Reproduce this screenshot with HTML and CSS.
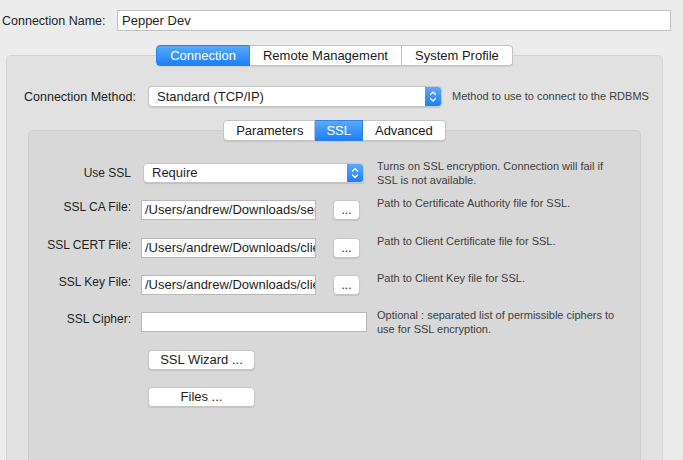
FILE: index.html
```html
<!DOCTYPE html>
<html>
<head>
<meta charset="utf-8">
<link rel="stylesheet" href="styles.css">
</head>
<body>
<div class="name-row">
  <span class="name-label">Connection Name:</span>
  <div class="name-input">Pepper Dev</div>
</div>
<div class="outer">
  <div class="tabs">
    <div class="seg sel">Connection</div>
    <div class="seg">Remote Management</div>
    <div class="seg">System Profile</div>
  </div>
  <div class="panel-outer">
    <div class="method-row">
      <span class="method-label">Connection Method:</span>
      <div class="popup method-popup">
        <span class="popup-text">Standard (TCP/IP)</span>
        <span class="stepper"><svg width="16" height="19" viewBox="0 0 16 19"><path d="M5.5 7.5 L8 5 L10.5 7.5 M5.5 11.5 L8 14 L10.5 11.5" fill="none" stroke="#fff" stroke-width="1.3" stroke-linecap="round" stroke-linejoin="round"/></svg></span>
      </div>
      <span class="help one">Method to use to connect to the RDBMS</span>
    </div>
    <div class="inner-wrap">
      <div class="tabs inner-tabs">
        <div class="seg t-params">Parameters</div>
        <div class="seg sel t-ssl">SSL</div>
        <div class="seg">Advanced</div>
      </div>
      <div class="panel-inner">
        <div class="grid">
          <span class="lbl mid">Use SSL</span>
          <div class="popup ssl-popup">
            <span class="popup-text">Require</span>
            <span class="stepper"><svg width="16" height="18" viewBox="0 0 16 18"><path d="M5.5 7 L8 4.5 L10.5 7 M5.5 11 L8 13.5 L10.5 11" fill="none" stroke="#fff" stroke-width="1.3" stroke-linecap="round" stroke-linejoin="round"/></svg></span>
          </div>
          <span class="help">Turns on SSL encryption. Connection will fail if<br>SSL is not available.</span>

          <span class="lbl">SSL CA File:</span>
          <div class="field">/Users/andrew/Downloads/ser</div>
          <div class="dots">...</div>
          <span class="help">Path to Certificate Authority file for SSL.</span>

          <span class="lbl">SSL CERT File:</span>
          <div class="field">/Users/andrew/Downloads/clie</div>
          <div class="dots">...</div>
          <span class="help">Path to Client Certificate file for SSL.</span>

          <span class="lbl">SSL Key File:</span>
          <div class="field">/Users/andrew/Downloads/clie</div>
          <div class="dots">...</div>
          <span class="help">Path to Client Key file for SSL.</span>

          <span class="lbl">SSL Cipher:</span>
          <div class="field wide"></div>
          <span class="help">Optional : separated list of permissible ciphers to<br>use for SSL encryption.</span>

          <span class="lbl"></span>
          <div class="btn">SSL Wizard ...</div>
          <span></span><span></span>

          <span class="lbl"></span>
          <div class="btn">Files ...</div>
          <span></span><span></span>
        </div>
      </div>
    </div>
  </div>
</div>
</body>
</html>
```

FILE: styles.css
```css
html, body {
  margin: 0;
  padding: 0;
}
body {
  background: #ececec;
  font-family: "Liberation Sans", Arial, sans-serif;
  font-size: 12px;
  color: #1e1e1e;
  height: 460px;
  overflow: hidden;
}
.name-row {
  display: flex;
  align-items: center;
  padding: 10px 0 0 2px;
  height: 21px;
}
.name-label {
  width: 115px;
  flex: none;
  font-size: 12.5px;
}
.name-input {
  flex: none;
  width: 554px;
  height: 21px;
  box-sizing: border-box;
  border: 1px solid #c2c2c2;
  background: #fff;
  padding: 0 0 0 4px;
  font-size: 13px;
  line-height: 19px;
}
.outer {
  margin: 0 20px 0 6px;
}
.tabs {
  display: flex;
  justify-content: center;
  margin-top: 14px;
  margin-bottom: -11px;
  position: relative;
  z-index: 1;
  height: 21px;
}
.seg {
  height: 21px;
  box-sizing: border-box;
  padding: 0 13px;
  background: #fff;
  border: 1px solid #c4c4c4;
  border-left: none;
  font-size: 13px;
  line-height: 19px;
  color: #1a1a1a;
  box-shadow: 0 1px 1px rgba(0,0,0,0.08);
}
.seg:first-child {
  border-left: 1px solid #c4c4c4;
  border-radius: 4px 0 0 4px;
}
.seg:last-child {
  border-radius: 0 4px 4px 0;
}
.seg.sel {
  background: linear-gradient(#5aaafc, #1d7ff7);
  border-color: #2a84f0;
  color: #fff;
}
.inner-tabs .seg {
  padding: 0 12px;
}
.inner-tabs .t-params {
  padding: 0 11px 0 12px;
}
.inner-tabs .t-ssl {
  padding: 0 11px;
}
.panel-outer {
  background: #e1e1e1;
  border: 1px solid #d4d4d4;
  border-bottom: none;
  border-radius: 5px 5px 0 0;
  height: 374px;
  padding: 30px 21px 0 21px;
}
.method-row {
  display: flex;
  align-items: center;
  height: 21px;
  margin-left: -4px;
}
.method-label {
  flex: none;
  width: 124px;
  font-size: 12.5px;
}
.popup {
  display: flex;
  flex: none;
  height: 21px;
  box-sizing: border-box;
  background: #fff;
  border: 1px solid #c6c6c6;
  border-radius: 4px;
  box-shadow: 0 1px 1px rgba(0,0,0,0.12);
  font-size: 13px;
  line-height: 19px;
  overflow: hidden;
}
.method-popup {
  width: 294px;
}
.popup-text {
  flex: 1;
  padding-left: 8px;
}
.stepper {
  flex: none;
  width: 16px;
  height: 19px;
  background: linear-gradient(#5aaafc, #1d7ff7);
  display: flex;
}
.help {
  font-size: 11px;
  line-height: 13.5px;
  color: #3d3d3d;
}
.help.one {
  flex: none;
  margin-left: 10px;
  white-space: nowrap;
}
.inner-wrap .tabs {
  margin-top: 13px;
}
.panel-inner {
  background: #d8d8d8;
  border: 1px solid #cecece;
  border-bottom: none;
  border-radius: 5px 5px 0 0;
  height: 297px;
  padding-top: 32px;
}
.grid {
  display: grid;
  grid-template-columns: 112px 175px 61px 1fr;
  grid-auto-rows: 20px;
  row-gap: 17.33px;
}
.lbl {
  text-align: right;
  padding-right: 10px;
  line-height: 14px;
}
.lbl.mid {
  line-height: 20px;
}
.ssl-popup {
  grid-column: 2 / 4;
  margin-left: 2px;
  width: 221px;
  height: 20px;
}
.ssl-popup .stepper {
  height: 18px;
}
.ssl-popup .popup-text {
  line-height: 18px;
}
.field {
  height: 20px;
  box-sizing: border-box;
  background: #fff;
  border: 1px solid #b9b9b9;
  font-size: 13px;
  line-height: 18px;
  padding-left: 3px;
  white-space: nowrap;
  overflow: hidden;
}
.field.wide {
  grid-column: 2 / 4;
  width: 226px;
}
.dots {
  margin-left: 17px;
  width: 27px;
  height: 20px;
  box-sizing: border-box;
  background: #fff;
  border: 1px solid #c6c6c6;
  border-radius: 4px;
  box-shadow: 0 1px 1px rgba(0,0,0,0.1);
  text-align: center;
  line-height: 18px;
  font-size: 12px;
}
.grid .help {
  margin-top: -3px;
}
.btn {
  margin-left: 7px;
  width: 107px;
  height: 20px;
  box-sizing: border-box;
  background: #fff;
  border: 1px solid #c6c6c6;
  border-radius: 4px;
  box-shadow: 0 1px 1px rgba(0,0,0,0.1);
  text-align: center;
  font-size: 13px;
  line-height: 18px;
}
```
